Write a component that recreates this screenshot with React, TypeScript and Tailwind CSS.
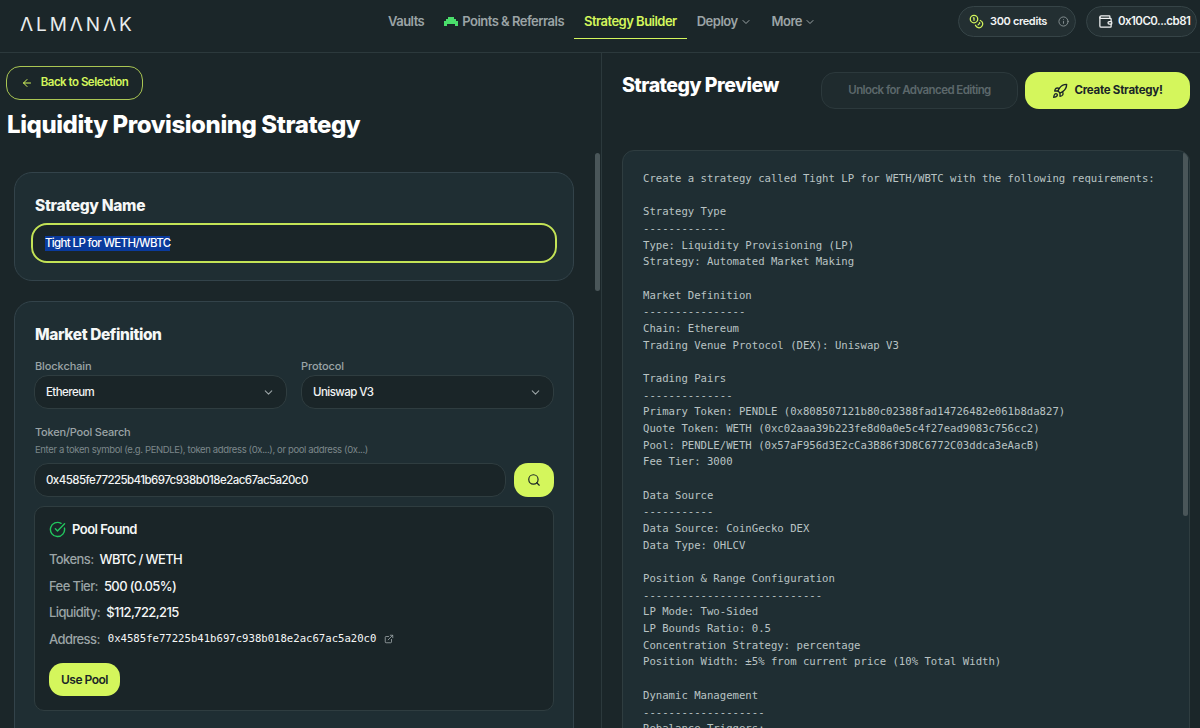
import { ArrowLeft, ChevronDown, CircleCheckBig, Coins, ExternalLink, Info, Rocket, Search, Wallet } from "lucide-react";

const previewLines = [
  "Create a strategy called Tight LP for WETH/WBTC with the following requirements:",
  "",
  "Strategy Type",
  "-------------",
  "Type: Liquidity Provisioning (LP)",
  "Strategy: Automated Market Making",
  "",
  "Market Definition",
  "----------------",
  "Chain: Ethereum",
  "Trading Venue Protocol (DEX): Uniswap V3",
  "",
  "Trading Pairs",
  "--------------",
  "Primary Token: PENDLE (0x808507121b80c02388fad14726482e061b8da827)",
  "Quote Token: WETH (0xc02aaa39b223fe8d0a0e5c4f27ead9083c756cc2)",
  "Pool: PENDLE/WETH (0x57aF956d3E2cCa3B86f3D8C6772C03ddca3eAacB)",
  "Fee Tier: 3000",
  "",
  "Data Source",
  "-----------",
  "Data Source: CoinGecko DEX",
  "Data Type: OHLCV",
  "",
  "Position & Range Configuration",
  "----------------------------",
  "LP Mode: Two-Sided",
  "LP Bounds Ratio: 0.5",
  "Concentration Strategy: percentage",
  "Position Width: ±5% from current price (10% Total Width)",
  "",
  "Dynamic Management",
  "-------------------",
  "Rebalance Triggers:",
];

const PointsIcon = () => (
  <svg width="14" height="10" viewBox="0 0 14 10" fill="#4ade6b">
    <path d="M4 0h6v2h2v2h2v5h-3V7H3v2H0V4h2V2h2z" />
  </svg>
);

const NavBar = () => (
  <header className="flex h-[53px] shrink-0 items-center border-b border-[#2c393c] text-[13px] font-semibold tracking-[-0.52px] text-[#9ba4a6]">
    <div className="w-[378px] pb-[2px] pl-[20px] text-[19px] font-normal tracking-[2.9px] text-[#e8eced]">ΛLMΛNΛK</div>
    <nav className="flex h-full items-center">
      <a className="px-2.5 pb-[9px]">Vaults</a>
      <a className="flex items-center gap-1 px-2.5 pb-[9px]">
        <PointsIcon />
        Points &amp; Referrals
      </a>
      <a className="flex h-[39px] items-center self-start border-b border-[#d4f65c] px-2.5 pt-[5px] text-[#d4f65c]">Strategy Builder</a>
      <a className="flex items-center gap-[2px] px-2.5 pb-[8px]">
        Deploy <ChevronDown size={12} />
      </a>
      <a className="flex items-center gap-[2px] px-2.5 pb-[8px]">
        More <ChevronDown size={12} />
      </a>
    </nav>
    <div className="ml-auto flex items-center gap-[10px] pb-[9px] pr-[3px]">
      <div className="flex h-[31px] w-[118px] items-center rounded-full border border-[#364447] bg-[#232f32] pl-[10px] text-[11px] tracking-[-0.35px] text-[#f2f4f4]">
        <Coins size={15} className="text-[#d4f65c]" />
        <span className="ml-[6px]">300 credits</span>
        <Info size={11} className="ml-[11px] text-[#8a9496]" />
      </div>
      <div className="flex h-[31px] w-[111px] items-center rounded-full border border-[#364447] bg-[#232f32] pl-[11px] text-[11.5px] tracking-[-0.55px] text-[#f2f4f4]">
        <Wallet size={15} />
        <span className="ml-[5px]">0x10C0...cb81</span>
      </div>
    </div>
  </header>
);

const Field = ({ value, chevron }: { value: string; chevron?: boolean }) => (
  <div className="flex h-[34px] flex-1 items-center justify-between rounded-[14px] border border-[#2f3d40] bg-[#1a2528] pl-[11px] pr-[11px] pt-px text-[11.5px] font-medium tracking-[-0.56px] text-[#f2f4f4]">
    {value}
    {chevron && <ChevronDown size={13} className="text-[#9ba4a6]" />}
  </div>
);

const PoolRow = ({ label, value }: { label: string; value: string }) => (
  <div className="flex items-center gap-[6px] text-[13px] font-medium tracking-[-0.6px]">
    <span className="text-[#9ba4a6]">{label}</span>
    <span className="text-[#f5f7f7]">{value}</span>
  </div>
);

const LeftPane = () => (
  <section className="relative w-[602px] shrink-0 overflow-hidden border-r border-[#2c393c] pt-[13px]">
    <button className="ml-[6px] flex h-[34px] w-[137px] items-center justify-center gap-[8px] rounded-[14px] border border-[#aac653] text-[11.5px] font-semibold tracking-[-0.5px] text-[#d4f65c]">
      <ArrowLeft size={12} />
      Back to Selection
    </button>
    <h1 className="ml-[7px] mt-[9px] text-[24px] font-extrabold leading-[32px] tracking-[-0.42px] text-white">Liquidity Provisioning Strategy</h1>

    <div className="ml-[14px] mt-[31px] h-[109px] w-[560px] rounded-[18px] border border-[#33434a] bg-[#1f2e33] px-[18px] pt-[22px]">
      <h2 className="ml-[2px] text-[15.5px] font-extrabold leading-[22px] tracking-[-0.3px] text-[#f5f7f7]">Strategy Name</h2>
      <div className="-ml-[2px] mt-[6px] flex h-[40px] w-[526px] items-center rounded-[16px] border-2 border-[#c3e356] bg-[#1a2528] pl-[12px] text-[11.5px] font-medium tracking-[-0.65px] text-white">
        <span className="bg-[#0a3a9c] leading-[15px]">Tight LP for WETH/WBTC</span>
      </div>
    </div>

    <div className="ml-[14px] mt-[20px] h-[480px] w-[560px] rounded-[18px] border border-[#33434a] bg-[#1f2e33] px-[19px] pt-[21px]">
      <h2 className="ml-px text-[15.5px] font-extrabold leading-[24px] tracking-[-0.4px] text-[#f5f7f7]">Market Definition</h2>
      <div className="mt-[11px] flex gap-[14px]">
        <div className="flex-1">
          <p className="mb-px ml-px text-[11px] font-medium leading-[16px] tracking-[-0.1px] text-[#9ba4a6]">Blockchain</p>
          <Field value="Ethereum" chevron />
        </div>
        <div className="flex-1">
          <p className="mb-px text-[11px] font-medium leading-[16px] tracking-[-0.1px] text-[#9ba4a6]">Protocol</p>
          <Field value="Uniswap V3" chevron />
        </div>
      </div>
      <p className="ml-px mt-[15px] text-[11px] font-medium leading-[16px] tracking-[-0.2px] text-[#9ba4a6]">Token/Pool Search</p>
      <p className="ml-px mt-[3px] text-[9.5px] leading-[14px] tracking-[-0.36px] text-[#7c878a]">Enter a token symbol (e.g. PENDLE), token address (0x...), or pool address (0x...)</p>
      <div className="mt-[6px] flex gap-[8px]">
        <Field value="0x4585fe77225b41b697c938b018e2ac67ac5a20c0" />
        <button className="flex h-[34px] w-[40px] items-center justify-center rounded-[14px] bg-[#d4f65c] text-[#1a2528]">
          <Search size={14} />
        </button>
      </div>
      <div className="mt-[9px] h-[205px] rounded-[10px] border border-[#2f3d40] bg-[#1a2528] px-[14px] pt-[13px]">
        <div className="flex items-center gap-[6px] text-[13px] font-semibold leading-[18px] tracking-[-0.5px] text-[#f5f7f7]">
          <CircleCheckBig size={17} className="text-[#22c55e]" />
          Pool Found
        </div>
        <div className="mt-[13px] flex flex-col gap-[10.7px] leading-[16px]">
          <PoolRow label="Tokens:" value="WBTC / WETH" />
          <PoolRow label="Fee Tier:" value="500 (0.05%)" />
          <PoolRow label="Liquidity:" value="$112,722,215" />
          <div className="flex items-center gap-[8px] text-[13px] font-medium tracking-[-0.6px]">
            <span className="text-[#9ba4a6]">Address:</span>
            <span className="font-['DejaVu_Sans_Mono',monospace] text-[10.63px] tracking-normal text-[#f5f7f7]">0x4585fe77225b41b697c938b018e2ac67ac5a20c0</span>
            <ExternalLink size={10} className="text-[#9ba4a6]" />
          </div>
        </div>
        <button className="mt-[16px] h-[33px] w-[71px] rounded-[14px] bg-[#d4f65c] text-[12px] font-semibold tracking-[-0.5px] text-[#1a2528]">Use Pool</button>
      </div>
    </div>

    <div className="absolute left-[595px] top-[100px] h-[138px] w-[5px] rounded-full bg-[#4a5659]" />
  </section>
);

const RightPane = () => (
  <section className="relative min-w-0 flex-1 overflow-hidden pl-[20px] pr-[10px] pt-[19px]">
    <div className="flex items-start">
      <h2 className="text-[19.5px] font-extrabold leading-[26px] tracking-[-0.5px] text-white">Strategy Preview</h2>
      <div className="ml-auto flex gap-[7px]">
        <button className="h-[37px] w-[197px] rounded-[14px] border border-[#2c393c] bg-[#1f2b2e] pt-px text-[11.5px] font-semibold tracking-[-0.58px] text-[#5c686b]">Unlock for Advanced Editing</button>
        <button className="flex h-[37px] w-[165px] items-center justify-center gap-[6px] rounded-[14px] bg-[#d4f65c] pt-px text-[11.5px] font-bold tracking-[-0.25px] text-[#1a2528]">
          <Rocket size={16} />
          Create Strategy!
        </button>
      </div>
    </div>
    <div className="relative mt-[41px] h-[600px] w-[568px] overflow-hidden rounded-[12px] border border-[#2f3d40] bg-[#1f2e33] pl-[20px] pt-[20px]">
      <pre className="font-['DejaVu_Sans_Mono',monospace] text-[10.63px] leading-[16.67px] text-[#b9c3c3]">{previewLines.join("\n")}</pre>
      <div className="absolute right-[1px] top-[1px] h-[364px] w-[5px] rounded-full bg-[#4a5659]" />
    </div>
  </section>
);

export default function App() {
  return (
    <div className="flex h-[728px] w-[1200px] flex-col overflow-hidden bg-[#1b2629] font-['Inter',sans-serif]">
      <NavBar />
      <main className="flex min-h-0 flex-1">
        <LeftPane />
        <RightPane />
      </main>
    </div>
  );
}
